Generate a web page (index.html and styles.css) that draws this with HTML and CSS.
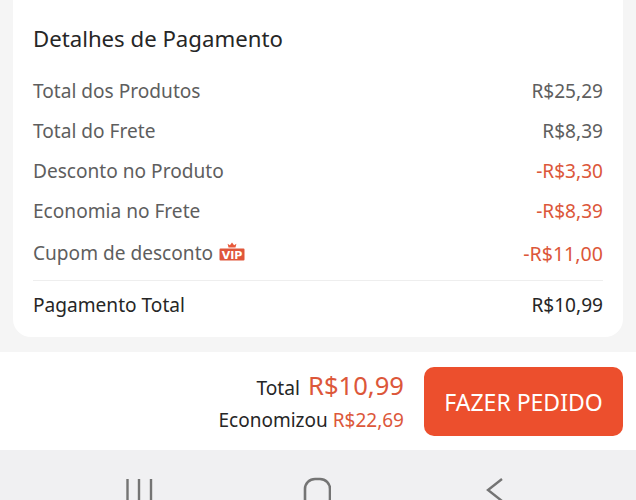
FILE: index.html
```html
<!DOCTYPE html>
<html lang="pt-BR">
<head>
    <meta charset="UTF-8">
    <meta name="viewport" content="width=device-width, initial-scale=1.0">
    <title>Detalhes de Pagamento</title>
    <link rel="stylesheet" href="styles.css">
</head>
<body>
    <div class="screen">
        <section class="card">
            <h2>Detalhes de Pagamento</h2>
            <div class="row"><span>Total dos Produtos</span><span>R$25,29</span></div>
            <div class="row"><span>Total do Frete</span><span>R$8,39</span></div>
            <div class="row"><span>Desconto no Produto</span><span class="red">-R$3,30</span></div>
            <div class="row"><span>Economia no Frete</span><span class="red">-R$8,39</span></div>
            <div class="row coupon">
                <span class="with-icon">Cupom de desconto
                    <svg class="vip" viewBox="0 0 26 20" width="26" height="20" aria-hidden="true">
                        <path d="M9.5 5.5 8.6 1.8l2.3 1.5L13 .6l2.1 2.7 2.3-1.5-.9 3.7z" fill="#e8593a"/>
                        <path d="M1.5 6.5h23a1 1 0 0 1 1 1v10a1 1 0 0 1-1 1h-23a1 1 0 0 1-1-1v-10a1 1 0 0 1 1-1z" fill="#e0563a"/>
                        <text x="13" y="16.6" text-anchor="middle" class="vip-text">VIP</text>
                    </svg>
                </span>
                <span class="red amount">-R$11,00</span>
            </div>
            <div class="row total"><span>Pagamento Total</span><span>R$10,99</span></div>
        </section>
        <footer class="checkout">
            <div class="sums">
                <div class="sum-line">Total <span class="big">R$10,99</span></div>
                <div class="save-line">Economizou <span class="red">R$22,69</span></div>
            </div>
            <button class="order">FAZER PEDIDO</button>
        </footer>
        <nav class="navbar">
            <svg width="28" height="50" viewBox="0 0 28 50"><path d="M2.5 29v21M14 29v21M26 29v21" stroke="#747474" stroke-width="2.4" fill="none"/></svg>
            <svg width="28" height="50" viewBox="0 0 28 50"><rect x="2" y="29" width="25" height="30" rx="10" stroke="#747474" stroke-width="2.6" fill="none"/></svg>
            <svg class="back" width="18" height="50" viewBox="0 0 18 50"><path d="M17 29 3 40l14 11" stroke="#747474" stroke-width="2.4" fill="none"/></svg>
        </nav>
    </div>
</body>
</html>
```

FILE: styles.css
```css
* { box-sizing: border-box; margin: 0; padding: 0; }
body {
    font-family: "Noto Sans", "Open Sans", sans-serif;
    background: #f5f5f5;
    color: #262626;
}
.screen { width: 636px; height: 500px; overflow: hidden; display: flex; flex-direction: column; }
.red { color: #dc573a; }

.card {
    height: 337px;
    margin: 0 13px 15px;
    padding: 22px 20px 0;
    background: #fff;
    border-radius: 0 0 18px 18px;
}
h2 { font-size: 22.2px; font-weight: 400; line-height: 34px; margin-bottom: 15px; }
.row {
    display: flex;
    justify-content: space-between;
    align-items: center;
    height: 40px;
    font-size: 19.1px;
    color: #5e5e5e;
}
.coupon { height: 42px; padding-top: 2px; }
.with-icon { display: flex; align-items: center; gap: 6px; }
.amount { font-size: 19.6px; }
.vip { margin-top: -3px; }
.vip-text { font-size: 11px; font-weight: 700; fill: #fff; font-family: "DejaVu Sans", sans-serif; }
.total {
    height: 50px;
    margin-top: 7px;
    padding-bottom: 2px;
    border-top: 1px solid #eeeeee;
    color: #262626;
}

.checkout {
    height: 98px;
    padding: 15px 13px 14px 0;
    background: #fff;
    display: flex;
    justify-content: flex-end;
    gap: 20px;
}
.sums { display: flex; flex-direction: column; align-items: flex-end; justify-content: center; padding-bottom: 3px; }
.sum-line { font-size: 19.2px; line-height: 38px; }
.big { font-size: 25.6px; color: #dc573a; margin-left: 3px; }
.save-line { font-size: 19px; line-height: 26px; }
.order {
    width: 199px;
    height: 69px;
    border: 0;
    border-radius: 10px;
    background: #ec4f2d;
    color: #fff;
    font-family: inherit;
    font-size: 23px;
}

.navbar {
    height: 50px;
    background: #f0f0f2;
    display: flex;
    gap: 150px;
    padding-left: 125px;
}
.back { margin-left: 4px; }
```
